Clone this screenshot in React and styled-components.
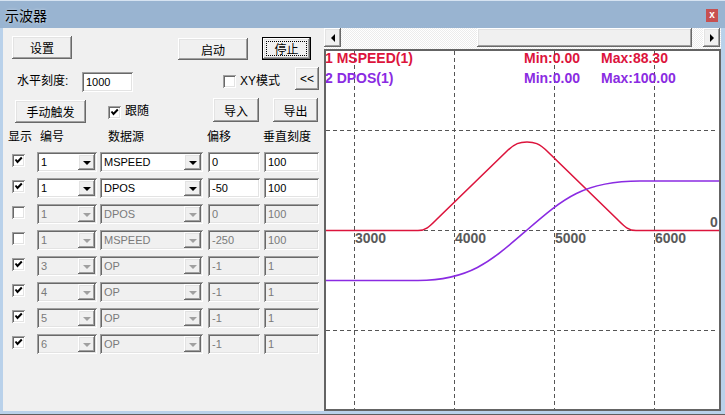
import React from "react";
import styled, { createGlobalStyle, css } from "styled-components";

const FONT = `"Liberation Sans", "Noto Sans CJK SC", sans-serif`;

const GlobalStyle = createGlobalStyle`
  html, body { margin: 0; padding: 0; background: #ffffff; }
  body { font-family: ${FONT}; }
  * { box-sizing: border-box; }
`;

const raised = css`
  background: #f0f0f0;
  box-shadow: inset -1px -1px #696969, inset 1px 1px #ffffff,
    inset -2px -2px #a0a0a0, inset 2px 2px #e3e3e3;
`;

const sunken = css`
  box-shadow: inset 1px 1px #a0a0a0, inset -1px -1px #ffffff,
    inset 2px 2px #696969, inset -2px -2px #e3e3e3;
`;

const Window = styled.div`
  width: 725px;
  height: 415px;
  background: #b9d1ea;
  border-top: 1px solid #d6e3f1;
  border-bottom: 1px solid #5e5e5e;
  display: flex;
  flex-direction: column;
  overflow: hidden;
`;

const TitleBar = styled.div`
  height: 27px;
  flex: none;
  background: #99b4d1;
  display: flex;
  align-items: center;
  justify-content: space-between;
  padding: 0 7px 0 5px;
`;

const Title = styled.span`
  font-family: "Noto Sans CJK SC", sans-serif;
  font-size: 14px;
  color: #000;
  text-shadow: 0 0 3px rgba(255, 255, 255, 0.6);
`;

const CloseBtn = styled.div`
  width: 12px;
  height: 13px;
  margin-top: 1px;
  background: #c75050;
  color: #fff;
  font: bold 10px "Liberation Sans", sans-serif;
  display: flex;
  align-items: center;
  justify-content: center;
  line-height: 1;
`;

const Body = styled.div`
  flex: 1;
  display: flex;
  padding: 0 4px 3px 3px;
`;

const LeftPanel = styled.div`
  width: 321px;
  background: #f0f0f0;
  padding-top: 8px;
  display: flex;
  flex-direction: column;
`;

const Row = styled.div`
  display: flex;
  align-items: flex-start;
  height: ${(p) => p.$h}px;
  margin-top: ${(p) => p.$mt || 0}px;
`;

const Button = styled.button`
  flex: none;
  width: ${(p) => p.$w}px;
  height: ${(p) => p.$h}px;
  margin: ${(p) => p.$mt || 0}px 0 0 ${(p) => p.$ml || 0}px;
  padding: 0;
  border: none;
  font-family: ${FONT};
  font-size: 12px;
  color: #000;
  position: relative;
  ${raised};
  ${(p) =>
    p.$default &&
    css`
      border: 1px solid #000;
      &::after {
        content: "";
        position: absolute;
        inset: 3px;
        border: 1px dotted #000;
      }
    `}
`;

const Label = styled.span`
  flex: none;
  width: ${(p) => p.$w}px;
  margin: ${(p) => p.$mt || 0}px 0 0 ${(p) => p.$ml || 0}px;
  font-size: 12px;
  line-height: 20px;
  color: #000;
  white-space: nowrap;
`;

const Field = styled.div`
  flex: none;
  width: ${(p) => p.$w}px;
  height: 20px;
  margin: ${(p) => p.$mt || 0}px 0 0 ${(p) => p.$ml || 0}px;
  padding: 0 4px;
  display: flex;
  align-items: center;
  font-family: "Liberation Sans", sans-serif;
  font-size: 11px;
  background: ${(p) => (p.$disabled ? "#f0f0f0" : "#ffffff")};
  color: ${(p) => (p.$disabled ? "#7a7a7a" : "#000")};
  ${sunken};
`;

const Combo = styled.div`
  flex: none;
  width: ${(p) => p.$w}px;
  height: 20px;
  padding: 2px;
  display: flex;
  align-items: center;
  background: ${(p) => (p.$disabled ? "#f0f0f0" : "#ffffff")};
  color: ${(p) => (p.$disabled ? "#7a7a7a" : "#000")};
  font-family: "Liberation Sans", sans-serif;
  font-size: 11px;
  ${sunken};
`;

const ComboText = styled.span`
  flex: 1;
  padding-left: 2px;
`;

const DropBtn = styled.span`
  width: 17px;
  height: 16px;
  display: flex;
  align-items: center;
  justify-content: center;
  ${raised};
`;

const TriDown = styled.span`
  width: 0;
  height: 0;
  border-left: 4px solid transparent;
  border-right: 4px solid transparent;
  border-top: 4px solid ${(p) => (p.$disabled ? "#a0a0a0" : "#000")};
  margin-top: 1px;
`;

const Check = styled.span`
  flex: none;
  width: 13px;
  height: 13px;
  margin: ${(p) => p.$mt || 0}px 0 0 ${(p) => p.$ml || 0}px;
  background: #fff;
  display: flex;
  align-items: center;
  justify-content: center;
  ${sunken};
`;

const HeaderRow = styled.div`
  display: grid;
  grid-template-columns: 32px 68px 99px 56px auto;
  padding-left: 5px;
  margin-top: 5px;
  font-size: 12px;
  line-height: 16px;
  color: #000;
`;

const Table = styled.div`
  display: flex;
  flex-direction: column;
  gap: 6px;
  margin-top: 7px;
  padding-left: 9px;
`;

const TableRow = styled.div`
  display: grid;
  grid-template-columns: 25px 63px 108px 56px 55px;
  height: 20px;
  align-items: start;
`;

const RightPanel = styled.div`
  width: 397px;
  display: flex;
  flex-direction: column;
`;

const ScrollBar = styled.div`
  height: 21px;
  flex: none;
  display: flex;
  align-items: flex-start;
  padding-right: 1px;
  background: repeating-conic-gradient(#ffffff 0 25%, #ececec 0 50%) 0 0 / 2px 2px;
`;

const ScrollArrow = styled.div`
  width: 17px;
  height: 19px;
  display: flex;
  align-items: center;
  justify-content: center;
  ${raised};
`;

const Thumb = styled.div`
  width: 215px;
  height: 19px;
  margin-left: 136px;
  margin-right: auto;
  ${raised};
`;

const TriSide = styled.span`
  width: 0;
  height: 0;
  border-top: 4px solid transparent;
  border-bottom: 4px solid transparent;
  ${(p) =>
    p.$dir === "left"
      ? css`border-right: 4px solid #000;`
      : css`border-left: 4px solid #000;`}
`;

const Plot = styled.div`
  flex: 1;
  background: #ffffff;
  border: 2px solid #646464;
  overflow: hidden;
`;

const CheckMark = () => (
  <svg width="9" height="9" viewBox="0 0 9 9">
    <path d="M1.5 3.5 L3.5 6 L7.8 1.5" fill="none" stroke="#000" strokeWidth="2" />
  </svg>
);

const CheckBox = ({ on, ml, mt }) => (
  <Check $ml={ml} $mt={mt}>
    {on && <CheckMark />}
  </Check>
);

const ComboBox = ({ w, value, disabled }) => (
  <Combo $w={w} $disabled={disabled}>
    <ComboText>{value}</ComboText>
    <DropBtn>
      <TriDown $disabled={disabled} />
    </DropBtn>
  </Combo>
);

const rows = [
  { on: true, id: "1", src: "MSPEED", off: "0", scale: "100", en: true },
  { on: true, id: "1", src: "DPOS", off: "-50", scale: "100", en: true },
  { on: false, id: "1", src: "DPOS", off: "0", scale: "100" },
  { on: false, id: "1", src: "MSPEED", off: "-250", scale: "100" },
  { on: true, id: "3", src: "OP", off: "-1", scale: "1" },
  { on: true, id: "4", src: "OP", off: "-1", scale: "1" },
  { on: true, id: "5", src: "OP", off: "-1", scale: "1" },
  { on: true, id: "6", src: "OP", off: "-1", scale: "1" },
];

const RED = "#dc143c";
const PURPLE = "#8a2be2";
const GRID = "#555555";

const Chart = () => (
  <svg width="393" height="358" viewBox="326 51 393 358" style={{ display: "block" }}>
    {[354.5, 454.5, 554.5, 654.5].map((x) => (
      <line key={x} x1={x} y1={51} x2={x} y2={409} stroke={GRID} strokeWidth="1" strokeDasharray="4 3" />
    ))}
    {[130.5, 230.5, 330.5].map((y) => (
      <line key={y} x1={326} y1={y} x2={717} y2={y} stroke={GRID} strokeWidth="1" strokeDasharray="4 3" />
    ))}
    <g fontFamily='"Liberation Sans", sans-serif' fontWeight="bold" fontSize="14">
      <text x="355" y="243" fill="#5a5a5a">3000</text>
      <text x="455" y="243" fill="#5a5a5a">4000</text>
      <text x="555" y="243" fill="#5a5a5a">5000</text>
      <text x="655" y="243" fill="#5a5a5a">6000</text>
      <text x="710" y="227" fill="#5a5a5a">0</text>
    </g>
    <path
      d="M326 230.5 H418 C426 230.5 430 226 436 220 L506 152 C515 143 520 142 527 142 C534 142 539 143 548 152 L618 220 C624 226 628 230.5 636 230.5 H720"
      fill="none"
      stroke={RED}
      strokeWidth="1.6"
    />
    <path
      d="M326 280.5 H418 C470 280 490 262 527 230 C564 198 584 181 640 181 H720"
      fill="none"
      stroke={PURPLE}
      strokeWidth="1.6"
    />
    <g fontFamily='"Liberation Sans", sans-serif' fontWeight="bold" fontSize="14">
      <text x="325" y="63" fill={RED}>1 MSPEED(1)</text>
      <text x="524" y="63" fill={RED}>Min:0.00</text>
      <text x="601" y="63" fill={RED}>Max:88.30</text>
      <text x="325" y="83" fill={PURPLE}>2 DPOS(1)</text>
      <text x="524" y="83" fill={PURPLE}>Min:0.00</text>
      <text x="601" y="83" fill={PURPLE}>Max:100.00</text>
    </g>
  </svg>
);

export default function App() {
  return (
    <>
      <GlobalStyle />
      <Window>
        <TitleBar>
          <Title>示波器</Title>
          <CloseBtn>x</CloseBtn>
        </TitleBar>
        <Body>
          <LeftPanel>
            <Row $h={24}>
              <Button $w={60} $h={23} $ml={9}>设置</Button>
              <Button $w={70} $h={22} $ml={106} $mt={2}>启动</Button>
              <Button $w={49} $h={23} $ml={14} $mt={1} $default>停止</Button>
            </Row>
            <Row $h={25} $mt={7}>
              <Label $w={65} $ml={14} $mt={4}>水平刻度:</Label>
              <Field $w={51} $mt={5}>1000</Field>
              <CheckBox ml={90} mt={8} on={false} />
              <Label $w={55} $ml={4} $mt={4}>XY模式</Label>
              <Button $w={24} $h={23}>&lt;&lt;</Button>
            </Row>
            <Row $h={26} $mt={6}>
              <Button $w={71} $h={23} $ml={12} $mt={2}>手动触发</Button>
              <CheckBox ml={22} mt={8} on />
              <Label $w={88} $ml={4} $mt={3}>跟随</Label>
              <Button $w={46} $h={24}>导入</Button>
              <Button $w={45} $h={24} $ml={14}>导出</Button>
            </Row>
            <HeaderRow>
              <span>显示</span>
              <span>编号</span>
              <span>数据源</span>
              <span>偏移</span>
              <span>垂直刻度</span>
            </HeaderRow>
            <Table>
              {rows.map((r, i) => (
                <TableRow key={i}>
                  <CheckBox on={r.on} mt={2} />
                  <ComboBox w={60} value={r.id} disabled={!r.en} />
                  <ComboBox w={103} value={r.src} disabled={!r.en} />
                  <Field $w={52} $disabled={!r.en}>{r.off}</Field>
                  <Field $w={55} $disabled={!r.en}>{r.scale}</Field>
                </TableRow>
              ))}
            </Table>
          </LeftPanel>
          <RightPanel>
            <ScrollBar>
              <ScrollArrow>
                <TriSide $dir="left" />
              </ScrollArrow>
              <Thumb />
              <ScrollArrow>
                <TriSide $dir="right" />
              </ScrollArrow>
            </ScrollBar>
            <Plot>
              <Chart />
            </Plot>
          </RightPanel>
        </Body>
      </Window>
    </>
  );
}
